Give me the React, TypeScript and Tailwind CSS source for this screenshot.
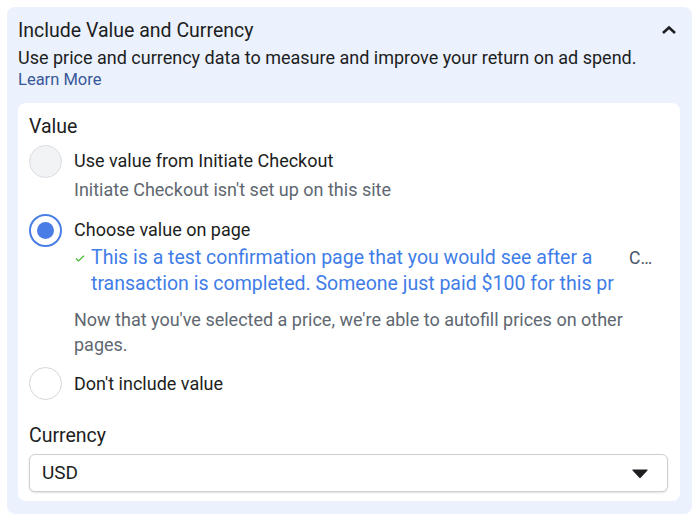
import React from "react";

function Radio({ checked, disabled }: { checked?: boolean; disabled?: boolean }) {
  if (checked) {
    return (
      <div className="flex h-[33px] w-[33px] shrink-0 items-center justify-center rounded-full border-2 border-[#4a7ee6] bg-white">
        <div className="h-[17px] w-[17px] rounded-full bg-[#4a7ee6]" />
      </div>
    );
  }
  if (disabled) {
    return <div className="h-[33px] w-[33px] shrink-0 rounded-full border border-[#dadde1] bg-[#f2f3f5]" />;
  }
  return <div className="h-[33px] w-[33px] shrink-0 rounded-full border border-[#d3d6db] bg-white" />;
}

export default function App() {
  return (
    <div className="bg-white p-[7px] pr-[8px] font-['Roboto',sans-serif] text-[#1c1e21]">
      <section className="w-[685px] rounded-lg bg-[#ebf1fd] pb-[13px] pl-[11px] pr-[12px] pt-[12px]">
        <div className="flex items-start justify-between">
          <h2 className="text-[19.5px] leading-[24px]">Include Value and Currency</h2>
          <svg width="16" height="10" viewBox="0 0 16 10" className="mr-[3px] mt-[6px]">
            <polyline points="2,8 8,2.5 14,8" fill="none" stroke="#1c1e21" strokeWidth="2.6" />
          </svg>
        </div>
        <p className="mt-[4px] text-[18px] leading-[22px]">
          Use price and currency data to measure and improve your return on ad spend.
        </p>
        <a className="block text-[16.5px] leading-[22px] text-[#385898]">Learn More</a>

        <div className="mt-[12px] rounded-lg bg-white pb-[9px] pl-[11px] pr-[12px] pt-[12px]">
          <h3 className="text-[19.5px] leading-[24px]">Value</h3>

          <div className="mt-[6px] flex gap-[12px]">
            <Radio disabled />
            <div className="mt-[4px]">
              <div className="text-[18px] leading-[24px]">Use value from Initiate Checkout</div>
              <div className="mt-[5px] text-[18px] leading-[24px] text-[#606770]">
                Initiate Checkout isn't set up on this site
              </div>
            </div>
          </div>

          <div className="mt-[12px] flex gap-[12px]">
            <Radio checked />
            <div className="mt-[4px] flex-1">
              <div className="text-[18px] leading-[24px]">Choose value on page</div>
              <div className="mt-[3px] flex">
                <svg width="10" height="7" viewBox="0 0 10 7" className="ml-[1px] mt-[10px] shrink-0">
                  <polyline points="1,3.5 3.5,6 9,0.8" fill="none" stroke="#42b72a" strokeWidth="1.2" />
                </svg>
                <div className="ml-[6px] w-[522px] text-[19.5px] leading-[26px] text-[#3f7de8]">
                  <div className="whitespace-nowrap">This is a test confirmation page that you would see after a</div>
                  <div className="whitespace-nowrap">transaction is completed. Someone just paid $100 for this pr</div>
                </div>
                <div className="ml-[16px] text-[17.5px] leading-[26px] text-[#4b5566]">C…</div>
              </div>
              <p className="mt-[10px] w-[570px] text-[18px] leading-[25px] text-[#606770]">
                Now that you've selected a price, we're able to autofill prices on other pages.
              </p>
            </div>
          </div>

          <div className="mt-[10px] flex items-center gap-[12px]">
            <Radio />
            <div className="text-[18px] leading-[24px]">Don't include value</div>
          </div>

          <h3 className="mt-[24px] text-[19.5px] leading-[24px]">Currency</h3>
          <div className="mt-[6px] flex h-[38px] items-center justify-between rounded-md border border-[#ccd0d5] bg-white pl-[12px] pr-[19px] shadow-[0_1px_2px_rgba(0,0,0,0.12)]">
            <span className="text-[19px]">USD</span>
            <svg width="16" height="9" viewBox="0 0 16 9">
              <polygon points="1,1 15,1 8,8.5" fill="#1c1e21" strokeLinejoin="round" stroke="#1c1e21" strokeWidth="1.2" />
            </svg>
          </div>
        </div>
      </section>
    </div>
  );
}
